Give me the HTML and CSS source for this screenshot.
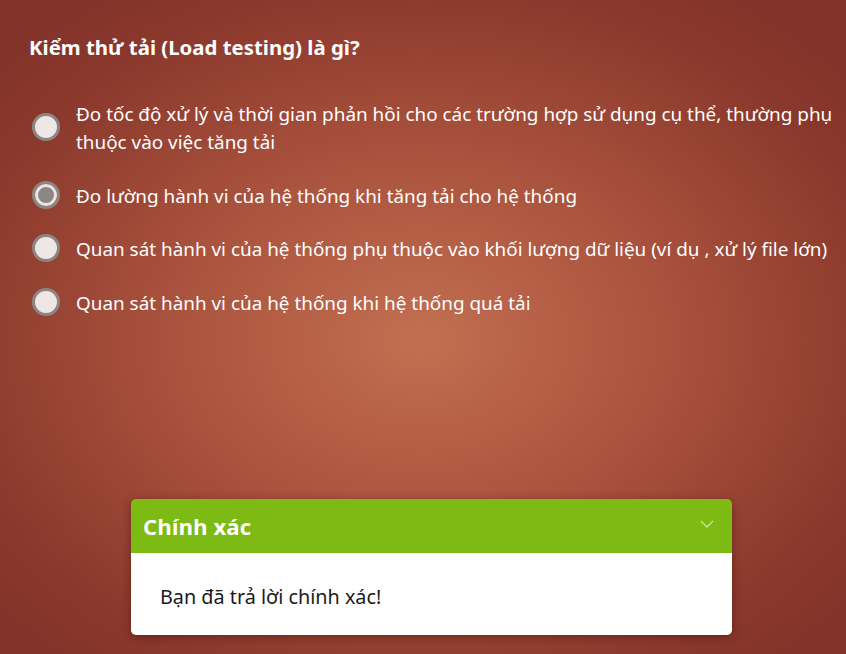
FILE: index.html
```html
<!DOCTYPE html>
<html lang="vi">
<head>
<meta charset="utf-8">
<link rel="stylesheet" href="styles.css">
</head>
<body>
<main class="page">
  <h1 class="question">Kiểm thử tải (Load testing) là gì?</h1>
  <ul class="options">
    <li class="option"><span class="radio"></span><span class="label">Đo tốc độ xử lý và thời gian phản hồi cho các trường hợp sử dụng cụ thể, thường phụ thuộc vào việc tăng tải</span></li>
    <li class="option"><span class="radio checked"></span><span class="label">Đo lường hành vi của hệ thống khi tăng tải cho hệ thống</span></li>
    <li class="option"><span class="radio"></span><span class="label">Quan sát hành vi của hệ thống phụ thuộc vào khối lượng dữ liệu (ví dụ , xử lý file lớn)</span></li>
    <li class="option"><span class="radio"></span><span class="label">Quan sát hành vi của hệ thống khi hệ thống quá tải</span></li>
  </ul>
  <section class="feedback">
    <header class="feedback-head">
      <span class="feedback-title">Chính xác</span>
      <svg class="chev" width="14" height="8" viewBox="0 0 14 8"><path d="M1 1 L7 7 L13 1" fill="none" stroke="#c9e59a" stroke-width="1.3"/></svg>
    </header>
    <div class="feedback-body">Bạn đã trả lời chính xác!</div>
  </section>
</main>
</body>
</html>
```
FILE: styles.css
```css
html, body {
  margin: 0;
  height: 100%;
}
body {
  background: radial-gradient(ellipse 560px 420px at 420px 340px, #c26f51 0%, #a9523d 45%, #8a382c 85%, #84332a 100%);
  background-color: #84332a;
  font-family: "Noto Sans", "Open Sans", sans-serif;
  color: #fff;
  overflow: hidden;
}
.page {
  padding: 31px 6px 0 31px;
  height: 654px;
  box-sizing: border-box;
  display: flex;
  flex-direction: column;
}
.question {
  margin: 0 0 0 -2px;
  font-size: 20.4px;
  font-weight: 700;
  line-height: 32px;
}
.options {
  list-style: none;
  margin: 37px 0 0 0;
  padding: 0;
  display: flex;
  flex-direction: column;
  gap: 25.7px;
}
.option {
  display: flex;
  align-items: center;
  gap: 16px;
}
.radio {
  flex: none;
  width: 28px;
  height: 28px;
  box-sizing: border-box;
  border-radius: 50%;
  border: 3px solid #8d8581;
  background: #efe6e6;
  margin: -2px 0 0 1px;
}
.radio.checked {
  background: #8c8684;
  box-shadow: inset 0 0 0 3px #ece3e2;
}
.label {
  font-size: 18.9px;
  line-height: 28px;
}
.feedback {
  margin: auto 0 19px 100px;
  width: 601px;
  border-radius: 5px;
  overflow: hidden;
  box-shadow: 0 2px 10px rgba(60, 10, 5, 0.45);
}
.feedback-head {
  background: #7dba13;
  height: 54px;
  display: flex;
  align-items: center;
  justify-content: space-between;
  padding: 0 18px 0 12px;
}
.feedback-title {
  font-family: "Open Sans", "Noto Sans", sans-serif;
  font-size: 22.2px;
  font-weight: 700;
  color: #fff;
}
.chev {
  margin-top: -4px;
}
.feedback-body {
  background: #fff;
  color: #1a1a1a;
  font-size: 19.8px;
  padding: 30px 29px 24px;
  line-height: 28px;
}
```
